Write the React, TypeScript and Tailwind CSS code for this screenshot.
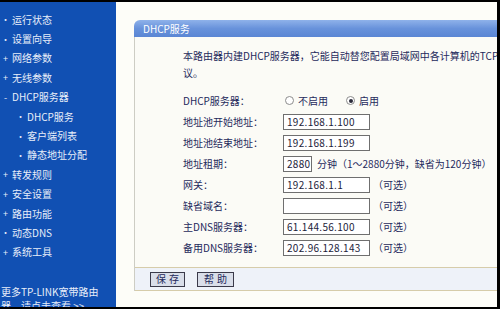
import React from 'react';

const menu = [
  { mark: '•', text: '运行状态' },
  { mark: '•', text: '设置向导' },
  { mark: '+', text: '网络参数' },
  { mark: '+', text: '无线参数' },
  { mark: '-', text: 'DHCP服务器' },
  { mark: '•', text: 'DHCP服务', sub: true },
  { mark: '•', text: '客户端列表', sub: true },
  { mark: '•', text: '静态地址分配', sub: true },
  { mark: '+', text: '转发规则' },
  { mark: '+', text: '安全设置' },
  { mark: '+', text: '路由功能' },
  { mark: '•', text: '动态DNS' },
  { mark: '+', text: '系统工具' },
];

const Radio = ({ checked }: { checked?: boolean }) => (
  <span className="w-[9px] h-[9px] rounded-full border border-[#8c8c8c] bg-white flex items-center justify-center">
    {checked && <span className="w-[4px] h-[4px] rounded-full bg-[#2a2a3a]" />}
  </span>
);

const Field = ({ value, w = 'w-[87px]' }: { value: string; w?: string }) => (
  <div className={`${w} h-[16px] border border-[#6f6f6f] bg-white pl-[3px] flex items-center text-[#1c1c3a] tracking-[0.3px]`}>
    {value}
  </div>
);

const Row = ({ label, children }: { label: string; children: React.ReactNode }) => (
  <div className="h-[21px] flex items-center">
    <div className="w-[100px]">{label}</div>
    <div className="flex items-center gap-[2px]">{children}</div>
  </div>
);

const Optional = () => <span className="ml-[1px]">（可选）</span>;

export default function App() {
  return (
    <div className="w-[500px] h-[309px] overflow-hidden border-t-2 border-r-[3px] border-b-2 border-black bg-[#fdfdf8] flex font-['Noto_Sans_CJK_SC',sans-serif] text-[10px]">
      {/* left menu */}
      <div className="w-[116px] shrink-0 bg-[#1150b3] text-[#e8eef9] pt-[8px]">
        {menu.map((m) => (
          <div key={m.text} className={`h-[19.4px] flex items-center leading-none ${m.sub ? 'pl-[15px]' : 'pl-0'}`}>
            <span className="w-[11px] flex justify-center text-[9px]">{m.mark}</span>
            <span className="ml-[1px]">{m.text}</span>
          </div>
        ))}
        <div className="mt-[23px] pl-[1px] leading-[14px]">
          更多TP-LINK宽带路由
          <br />
          器，请点击查看 &gt;&gt;
        </div>
      </div>

      {/* main */}
      <div className="flex-1 overflow-hidden pl-[18px] pt-[18px]">
        <div className="w-[420px]">
          <div className="h-[17px] rounded-tl-[6px] bg-gradient-to-b from-[#8fb2ea] via-[#6892db] to-[#5a86d4] text-white pl-[9px] flex items-center leading-none">
            DHCP服务
          </div>
          <div className="border-l border-[#cdcdc4] bg-[#fbfbf6] text-[#1f2a5c]">
            <div className="pl-[48px] pt-[10px] leading-[17px] whitespace-nowrap">
              <div>本路由器内建DHCP服务器，它能自动替您配置局域网中各计算机的TCP/IP协</div>
              <div>议。</div>
            </div>
            <div className="pl-[48px] mt-[9px] mb-[9px]">
              <Row label="DHCP服务器：">
                <div className="flex items-center gap-[4px] ml-[2px]">
                  <Radio />
                  <span>不启用</span>
                  <span className="w-[10px]" />
                  <Radio checked />
                  <span>启用</span>
                </div>
              </Row>
              <Row label="地址池开始地址：">
                <Field value="192.168.1.100" />
              </Row>
              <Row label="地址池结束地址：">
                <Field value="192.168.1.199" />
              </Row>
              <Row label="地址租期：">
                <Field value="2880" w="w-[29px]" />
                <span className="ml-[3px]">分钟（1～2880分钟，缺省为120分钟）</span>
              </Row>
              <Row label="网关：">
                <Field value="192.168.1.1" />
                <Optional />
              </Row>
              <Row label="缺省域名：">
                <Field value="" />
                <Optional />
              </Row>
              <Row label="主DNS服务器：">
                <Field value="61.144.56.100" />
                <Optional />
              </Row>
              <Row label="备用DNS服务器：">
                <Field value="202.96.128.143" />
                <Optional />
              </Row>
            </div>
            <div className="h-[24px] border-t border-b border-[#d6ccaa] bg-[#eef2f9] flex items-center gap-[12px] pl-[15px]">
              <button className="w-[35px] h-[15px] border border-[#3a3a4a] bg-[#d9dee9] text-[#1f2a5c] leading-none tracking-[3px] pl-[3px]">
                保存
              </button>
              <button className="w-[37px] h-[15px] border border-[#3a3a4a] bg-[#d9dee9] text-[#1f2a5c] leading-none tracking-[3px] pl-[3px]">
                帮助
              </button>
            </div>
          </div>
        </div>
      </div>
    </div>
  );
}
